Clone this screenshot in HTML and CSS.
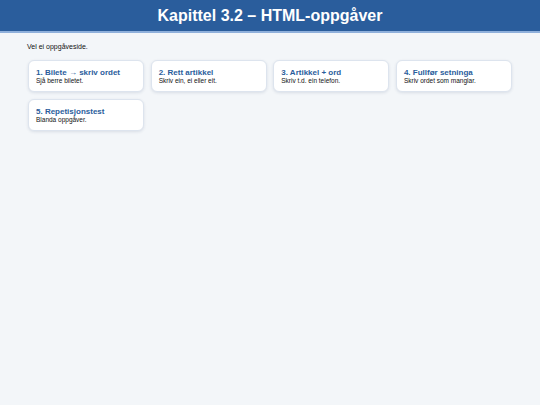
FILE: index.html
```html
<!DOCTYPE html>
<html lang="nn">
<head>
<meta charset="utf-8">
<title>Kapittel 3.2 – HTML-oppgåver</title>
<link rel="stylesheet" href="styles.css">
</head>
<body>
<header class="top">
  <h1>Kapittel 3.2 – HTML-oppgåver</h1>
</header>
<main class="wrap">
  <p class="intro">Vel ei oppgåveside.</p>
  <div class="grid">
    <a class="card" href="#"><span class="title">1. Bilete → skriv ordet</span><span class="sub">Sjå berre biletet.</span></a>
    <a class="card" href="#"><span class="title">2. Rett artikkel</span><span class="sub">Skriv ein, ei eller eit.</span></a>
    <a class="card" href="#"><span class="title">3. Artikkel + ord</span><span class="sub">Skriv t.d. ein telefon.</span></a>
    <a class="card" href="#"><span class="title">4. Fullfør setninga</span><span class="sub">Skriv ordet som manglar.</span></a>
    <a class="card" href="#"><span class="title">5. Repetisjonstest</span><span class="sub">Blanda oppgåver.</span></a>
  </div>
</main>
</body>
</html>
```
FILE: styles.css
```css
html, body {
  margin: 0;
  padding: 0;
}
body {
  background: #f3f6f9;
  font-family: "Liberation Sans", Arial, sans-serif;
  color: #111;
  width: 540px;
  height: 405px;
}
.top {
  background: #2a5d9c;
  border-bottom: 2px solid #8fb0db;
  height: 31px;
  display: flex;
  align-items: center;
  justify-content: center;
}
.top h1 {
  margin: 0;
  color: #fff;
  font-size: 16px;
  font-weight: bold;
}
.wrap {
  padding: 0 28px;
}
.intro {
  margin: 9px 0 9px -1px;
  font-size: 7px;
  line-height: 9px;
}
.grid {
  display: grid;
  grid-template-columns: repeat(4, 1fr);
  column-gap: 6.5px;
  row-gap: 7px;
}
.card {
  display: flex;
  flex-direction: column;
  justify-content: center;
  background: #fff;
  border: 1px solid #dde4ee;
  border-radius: 6px;
  box-shadow: 0 1px 3px rgba(30, 60, 100, 0.12);
  padding: 7px 7px 8px 7px;
  height: 15px;
  text-decoration: none;
  color: #111;
}
.title {
  color: #2a5d9c;
  font-weight: bold;
  font-size: 8px;
  line-height: 9px;
}
.sub {
  font-size: 6.5px;
  line-height: 7px;
}
```
